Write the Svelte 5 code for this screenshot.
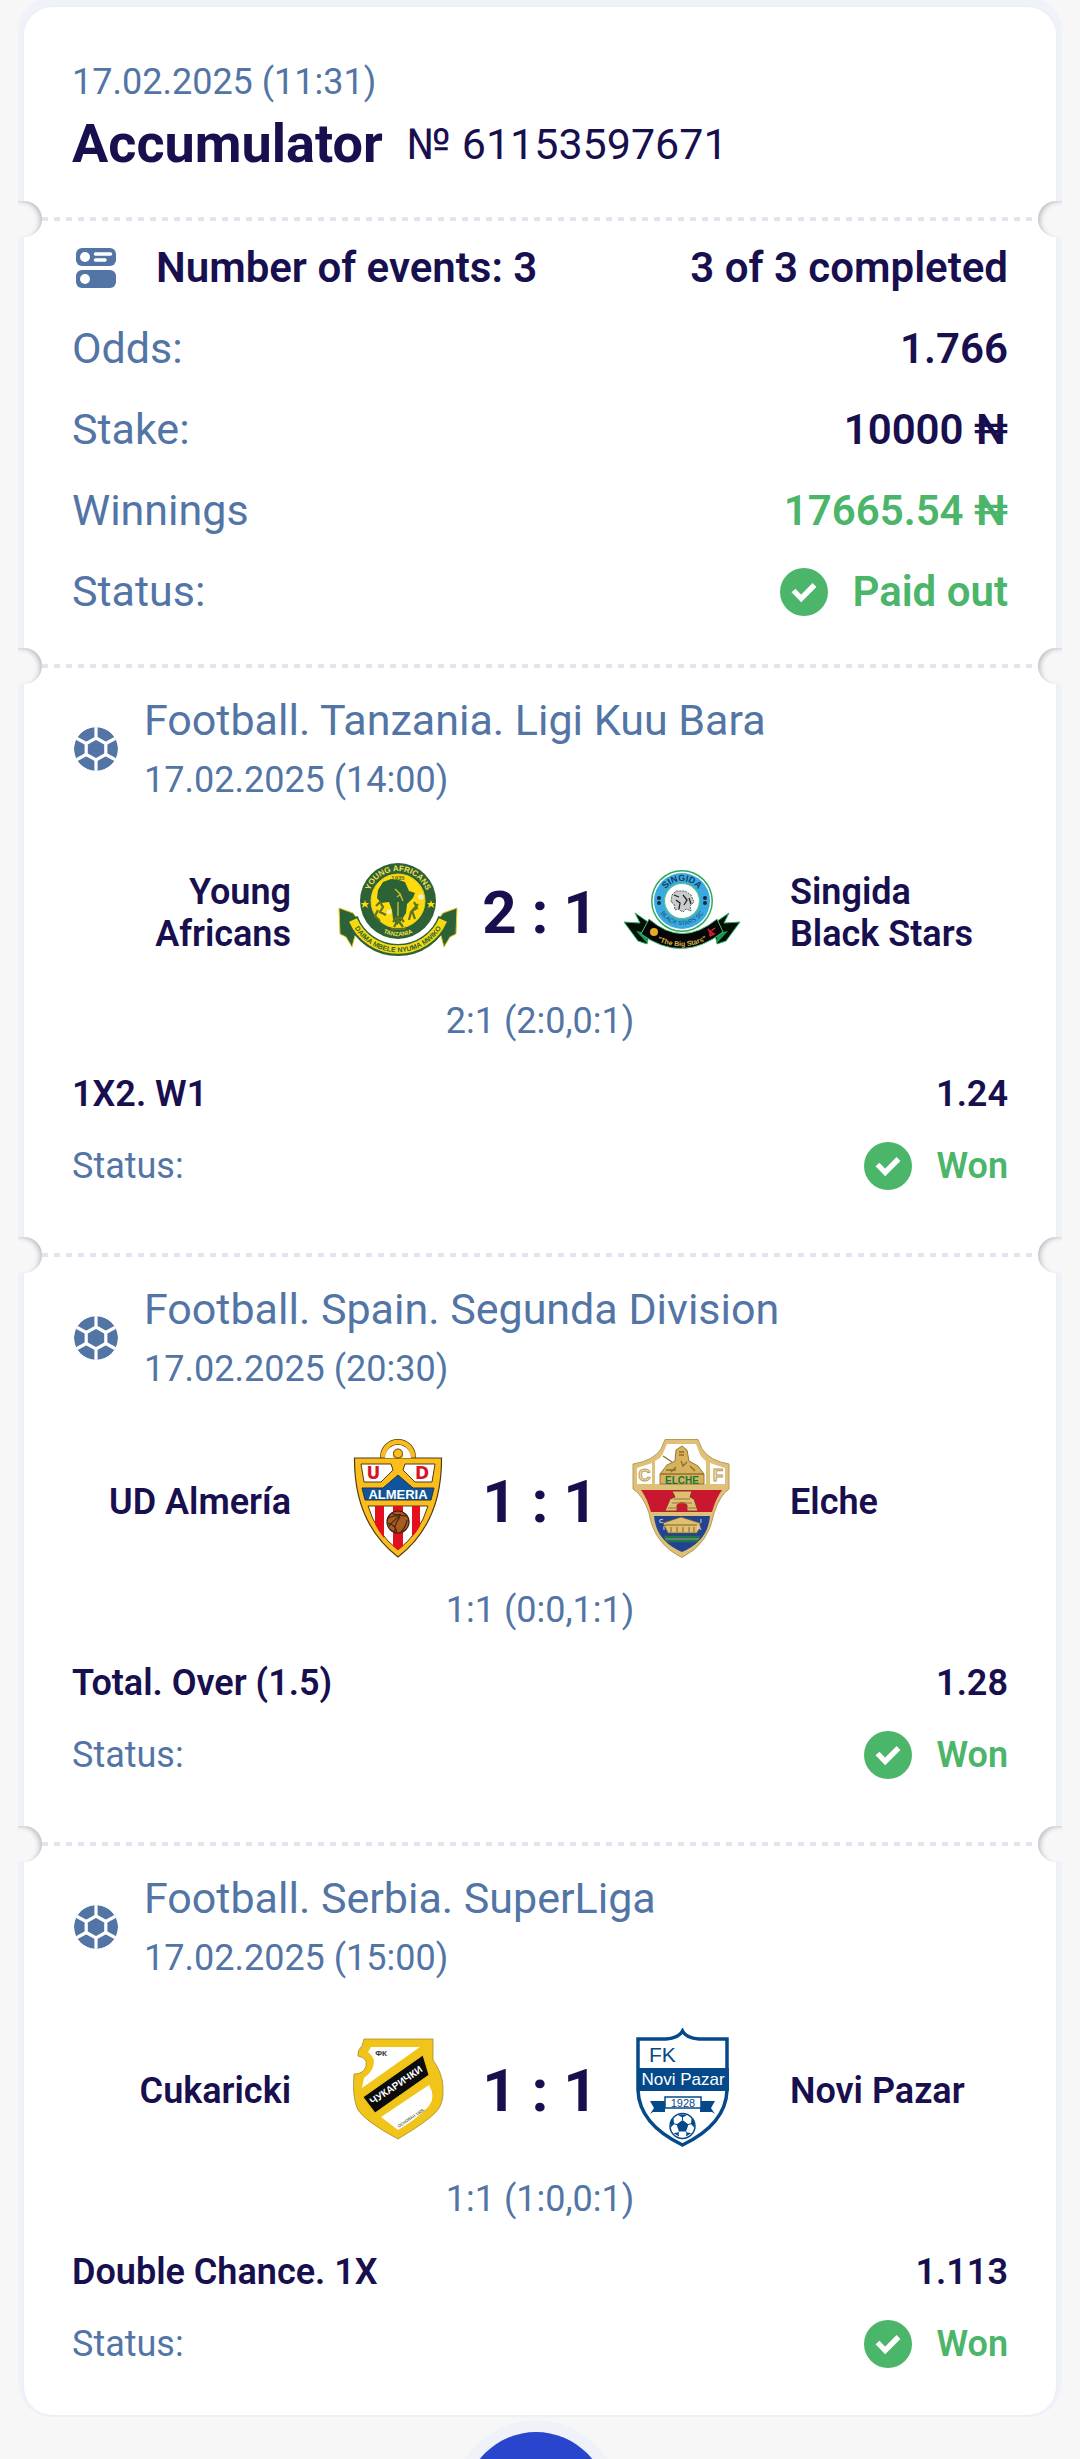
<script lang="ts">
  interface Team {
    name: string;
    crest: string;
  }

  interface BetEvent {
    league: string;
    date: string;
    home: Team;
    away: Team;
    score: string;
    periods: string;
    market: string;
    odds: string;
    status: string;
  }

  const slip = {
    date: '17.02.2025 (11:31)',
    type: 'Accumulator',
    number: '№ 61153597671',
    odds: '1.766',
    stake: '10000 ₦',
    winnings: '17665.54 ₦',
    status: 'Paid out',
  };

  const events: BetEvent[] = [
    {
      league: 'Football. Tanzania. Ligi Kuu Bara',
      date: '17.02.2025 (14:00)',
      home: { name: 'Young Africans', crest: 'yanga' },
      away: { name: 'Singida Black Stars', crest: 'singida' },
      score: '2 : 1',
      periods: '2:1 (2:0,0:1)',
      market: '1X2. W1',
      odds: '1.24',
      status: 'Won',
    },
    {
      league: 'Football. Spain. Segunda Division',
      date: '17.02.2025 (20:30)',
      home: { name: 'UD Almería', crest: 'almeria' },
      away: { name: 'Elche', crest: 'elche' },
      score: '1 : 1',
      periods: '1:1 (0:0,1:1)',
      market: 'Total. Over (1.5)',
      odds: '1.28',
      status: 'Won',
    },
    {
      league: 'Football. Serbia. SuperLiga',
      date: '17.02.2025 (15:00)',
      home: { name: 'Cukaricki', crest: 'cukaricki' },
      away: { name: 'Novi Pazar', crest: 'novipazar' },
      score: '1 : 1',
      periods: '1:1 (1:0,0:1)',
      market: 'Double Chance. 1X',
      odds: '1.113',
      status: 'Won',
    },
  ];

  const completed = events.filter((e) => e.status !== '').length;
</script>

{#snippet tear()}
  <div class="tear" aria-hidden="true">
    <span class="notch left"></span>
    <span class="perforation"></span>
    <span class="notch right"></span>
  </div>
{/snippet}

{#snippet check()}
  <svg class="check" viewBox="0 0 48 48" aria-hidden="true">
    <circle cx="24" cy="24" r="24" fill="#4bb56a" />
    <path d="M13.5 22.5l7.7 8L34.5 17" fill="none" stroke="#fff" stroke-width="5.4" />
  </svg>
{/snippet}

{#snippet crest(name: string)}
  <svg class="crest" viewBox="0 0 120 120" aria-hidden="true">
    {#if name === 'yanga'}
      <path d="M1 58l14 5 6 8-7 26-6-10-6-3z" fill="#2c6236" stroke="#e4c91c" stroke-width="1" />
      <path d="M119 58l-14 5-6 8 7 26 6-10 6-3z" fill="#2c6236" stroke="#e4c91c" stroke-width="1" />
      <path d="M14 68A49 49 0 0 0 106 68" fill="none" stroke="#2c6236" stroke-width="12" />
      <path d="M15 70A49 49 0 0 0 105 70" fill="none" stroke="#f6d90f" stroke-width="8.5" />
      <circle cx="60" cy="51" r="40" fill="#fff" />
      <circle cx="60" cy="51" r="38" fill="#2c6236" />
      <circle cx="60" cy="51" r="27" fill="#ffdb0d" stroke="#e8cf20" stroke-width="1" />
      <path
        d="M45 32l8-3 8 1 6 2 4 9 6 2-2 5-6 6-1 9-5 8-4 4-4-6-1-9-3-8-8 1-4-5 1-8z"
        fill="#2c6236"
      />
      <path d="M57 39l5 5 3 7M60 52v14M63 44l-4 3" fill="none" stroke="#cdbd2c" stroke-width="1.4" />
      <path
        d="M38 56l4-4 3 5-3 5 6 3M40 60l-3 6 5 5M76 52l3 6-5 3 3 8M80 54l-7 8-2 8M56 77l4-7 5 7M55 72l3-4h5l3 4M53 79h15"
        fill="none"
        stroke="#5d7420"
        stroke-width="2.2"
      />
      <circle cx="51" cy="62" r="2.4" fill="#efeacb" />
      <circle cx="83" cy="47" r="2.8" fill="#efeacb" />
      <path d="M27 50l1 3 3 0-2 2 1 3-3-2-3 2 1-3-2-2 3 0zM93 50l1 3 3 0-2 2 1 3-3-2-3 2 1-3-2-2 3 0z" fill="#ffdb0d" />
      <path id="yanga-top" d="M30 51A30 30 0 0 1 90 51" fill="none" />
      <path id="yanga-low" d="M25 51A35 35 0 0 0 95 51" fill="none" />
      <path id="yanga-banner" d="M13 71A51 51 0 0 0 107 71" fill="none" />
      <text class="b" font-size="8" fill="#f6e04a" text-anchor="middle">
        <textPath href="#yanga-top" startOffset="50%">YOUNG AFRICANS</textPath>
      </text>
      <text class="b" font-size="6" fill="#f6e04a" text-anchor="middle">
        <textPath href="#yanga-low" startOffset="50%">TANZANIA</textPath>
      </text>
      <text class="b" font-size="7" fill="#2c6236" text-anchor="middle">
        <textPath href="#yanga-banner" startOffset="50%">DAIMA MBELE NYUMA MWIKO</textPath>
      </text>
      <text class="b" x="60" y="30" font-size="6" fill="#4c6a1d" text-anchor="middle">1935</text>
    {:else if name === 'singida'}
      <path d="M2 72l16 1-5-10 16 11-4 20-9-3z" fill="#050f08" stroke="#35b567" stroke-width="1" />
      <path d="M118 72l-16 1 5-10-16 11 4 20 9-3z" fill="#050f08" stroke="#35b567" stroke-width="1" />
      <path d="M14 81l11 2v10zM106 81l-11 2v10z" fill="#149c53" />
      <path
        d="M27 69Q60 98 95 69L101 82Q60 114 19 84z"
        fill="#060606"
        stroke="#4fc17c"
        stroke-width="1"
      />
      <circle cx="60" cy="51" r="31" fill="#2cab5d" />
      <circle cx="60" cy="51" r="29.5" fill="#fff" />
      <circle cx="60" cy="51" r="28" fill="#3aa9df" />
      <circle cx="60" cy="51" r="17.5" fill="#fff" stroke="#50c487" stroke-width="1.2" />
      <path
        d="M50 45l4-4 9 0 6 4 3 7-4 4 1 5-5-2-3 3-5-3-3 1-1-6-3-2z"
        fill="#c9cccc"
        stroke="#5b6060"
        stroke-width="1"
        stroke-dasharray="2 1"
      />
      <path d="M54 50l4 3-1 6M61 45l4 5-3 5M67 48l2 6M52 45l5 2" fill="none" stroke="#222" stroke-width="1.3" />
      <path id="singida-top" d="M40 51A20 20 0 0 1 80 51" fill="none" />
      <path id="singida-low" d="M35 50A25 25 0 0 0 85 50" fill="none" />
      <path id="singida-motto" d="M30 88Q60 105 90 87" fill="none" />
      <text class="b" font-size="9" fill="#173c63" text-anchor="middle">
        <textPath href="#singida-top" startOffset="50%">SINGIDA</textPath>
      </text>
      <text font-size="6" fill="#1b4a73" text-anchor="middle">
        <textPath href="#singida-low" startOffset="50%">BLACK STARS SC</textPath>
      </text>
      <text class="b" font-size="7" fill="#d9b44e" text-anchor="middle">
        <textPath href="#singida-motto" startOffset="50%">"The Big Stars"</textPath>
      </text>
      <g fill="#10283d">
        <circle cx="37" cy="48" r="2" /><circle cx="37" cy="53" r="2" />
        <circle cx="83" cy="48" r="2" /><circle cx="83" cy="53" r="2" />
      </g>
      <circle cx="32" cy="82" r="4" fill="#e8ab20" />
      <path d="M86 79q3 3 2 7M93 78l-5 4 4 2-4 2" fill="none" stroke="#dc2230" stroke-width="1.6" />
    {:else if name === 'almeria'}
      <circle cx="60" cy="18" r="15" fill="#fff" stroke="#4d3f17" stroke-width="6" />
      <circle cx="60" cy="18" r="15" fill="none" stroke="#fcbc1c" stroke-width="4.5" />
      <path
        d="M16.5 19h87Q104 84 60 118 16 84 16.5 19z"
        fill="#fcbc1c"
        stroke="#4d3f17"
        stroke-width="1.2"
      />
      <path d="M23 25h30l2 6-12 12H26zM97 25H67l-2 6 12 12h17z" fill="#fff" stroke="#4d3f17" stroke-width="1" />
      <path d="M47 19a13 13 0 0 1 26 0z" fill="#fff" />
      <path d="M60 12v6M55 18l5-2 5 2" stroke="#fcbc1c" stroke-width="3" />
      <circle cx="60" cy="14.5" r="4.5" fill="#fcbc1c" stroke="#4d3f17" stroke-width="1" />
      <path d="M24 49h21l15-13 15 13h21l-3 12H27z" fill="#10559c" stroke="#233449" stroke-width="1" />
      <path d="M30 67h60Q82 94 60 111 38 94 30 67z" fill="#fff" stroke="#4d3f17" stroke-width="1" />
      <path d="M37 67h9v32q-5-6-9-14zM55 67h10v40l-5 4-5-4zM74 67h8v20q-4 7-8 11z" fill="#e30f1f" />
      <circle cx="60" cy="83" r="11" fill="#a65c21" stroke="#3f1f0e" stroke-width="1.2" />
      <path
        d="M50 79q9-4 19-2M53 74q6 3 10 1M51 87q7-8 11-10M57 93q-1-8 5-15M63 93q5-5 6-12M50 84q7 1 9 10"
        fill="none"
        stroke="#4c250e"
        stroke-width="1.2"
      />
      <text class="b wide" x="35.5" y="40" font-size="17" fill="#d71525" text-anchor="middle">U</text>
      <text class="b wide" x="84" y="40" font-size="17" fill="#d71525" text-anchor="middle">D</text>
      <text class="b" x="60" y="60" font-size="13" fill="#fff" text-anchor="middle">ALMERIA</text>
    {:else if name === 'elche'}
      <path
        d="M43 .5H76L80 10Q88 22 107 25V50Q98 56 92 74 87 105 60 118.5 32 105 27 74 21 56 11 50V25Q31 22 39 10z"
        fill="#dfc078"
        stroke="#b89a58"
        stroke-width="1"
      />
      <path d="M45 5H74L77 13Q79 19 84 22V45H33V22Q40 19 42 12z" fill="#fff" />
      <path d="M15 29l15-5V45H15zM103 29l-15-5V45h15z" fill="#fff" />
      <path d="M19 51H100Q94 59 90 73H29Q25 59 19 51z" fill="#c8172f" />
      <path d="M32 77H88Q86 102 60 113 34 102 32 77z" fill="#224490" />
      <path d="M42 98H78M44 102H76" stroke="#1b7a43" stroke-width="2.5" />
      <path d="M43 100H77" stroke="#dfc078" stroke-width=".8" />
      <path
        d="M38 35l7-9 8-4 1-11 6-4 5 4 2 11 9 5 6 8zM38 35h44v10H38z"
        fill="#d6b25c"
        stroke="#8c6d2c"
        stroke-width=".9"
      />
      <path d="M41 17l9 6M54 28l-5 5M59 22l2 5 4-4M68 27l5 5M57 13h5M57 16h5M44 31h10" stroke="#8c6d2c" stroke-width="1.3" fill="none" />
      <path d="M50 52h20l-2 6 4 2 4 12H65v-6q-5-5-10 0v6H43l5-12 5-2z" fill="#e0bf72" stroke="#8e3527" stroke-width="1" />
      <path d="M52 60h16M50 64h20M46 69h8M66 69h9" stroke="#98703a" stroke-width="1" />
      <path d="M41 84l18-6 19 6v4l-3 6H46l-3-6z" fill="#e0bf72" stroke="#66592e" stroke-width=".8" />
      <path d="M43 86h32M49 88v5M55 88v5M61 88v5M67 88v5M72 88v5" stroke="#77642c" stroke-width="1" />
      <text class="b" x="60" y="44.5" font-size="10" fill="#16763d" text-anchor="middle">ELCHE</text>
      <text class="b" x="22.5" y="42" font-size="17" fill="#f4e5be" stroke="#bc9d59" stroke-width="1" text-anchor="middle">C</text>
      <text class="b" x="96" y="42" font-size="17" fill="#f4e5be" stroke="#bc9d59" stroke-width="1" text-anchor="middle">F</text>
      <g class="b" font-size="6" fill="#d9dbe2">
        <text x="37" y="84">C</text><text x="41" y="91">I</text>
        <text x="78" y="84">I</text><text x="75" y="91">A</text>
      </g>
    {:else if name === 'cukaricki'}
      <path
        d="M26 11H95V32Q105 46 105 60 106 76 98 84 90 93 60 111 28 94 20 82 14 70 16 46 26 46 28 38 30 30 20 28 19 22 24 18z"
        fill="#f0c419"
        stroke="#a88a2b"
        stroke-width=".8"
      />
      <path d="M33 19H82L24 60 26 50Q36 43 36 33 35 28 30 24z" fill="#fff" />
      <path d="M43 89L91 57Q98 69 91 78 79 91 60 102z" fill="#fff" />
      <path d="M85 27L91 47 37 85 25 69z" fill="#0b0b0b" stroke="#f0c419" stroke-width="1" />
      <text class="b" x="43" y="28" font-size="8" fill="#3c3628" text-anchor="middle">ФК</text>
      <text class="b" font-size="10" fill="#fff" text-anchor="middle" transform="translate(60 60) rotate(-34)">ЧУКАРИЧКИ</text>
      <text class="b" font-size="4" fill="#5d5a4e" text-anchor="middle" transform="translate(74 91) rotate(-34)">ОСНОВАН 1926.</text>
    {:else if name === 'novipazar'}
      <path
        d="M16 11H44Q57 10 60.5 3 64 10 77 11H105V62Q104 96 60.5 117 17 96 16 62z"
        fill="#fff"
        stroke="#05498a"
        stroke-width="3.5"
      />
      <path d="M15 40H107V63H15z" fill="#05498a" />
      <path d="M28 73h15v11H31l-3 2 4-6zM93 73H78v11h12l3 2-4-6z" fill="#05498a" />
      <path d="M43 69h36v11H43z" fill="#fff" stroke="#05498a" stroke-width="1.5" />
      <circle cx="60.5" cy="98" r="12.5" fill="#fff" stroke="#05498a" stroke-width="1.5" />
      <path
        d="M60.5 92l6 4.500-2.500 7h-7l-2.500-7zM55 86.500h11l-5.500 3zM49 93l2.500-3 .5 6-3.500 4zM72 93l-2.500-3-.5 6 3.500 4zM51.500 105l5-.5.5 4zM69.500 105l-5-.5-.5 4z"
        fill="#05498a"
      />
      <path d="M60.5 92v-3M66 96.500l4-1M64 103.500l2 3M57 103.500l-2 3M55 96.500l-4-1" stroke="#05498a" stroke-width="1" />
      <text x="27" y="34" font-size="21" fill="#05498a">FK</text>
      <text x="61" y="57" font-size="17" fill="#fff" text-anchor="middle">Novi Pazar</text>
      <text x="61" y="78.5" font-size="11" fill="#05498a" text-anchor="middle">1928</text>
    {/if}
  </svg>
{/snippet}

<main class="page">
  <article class="slip">
    <header class="head">
      <time class="small muted">{slip.date}</time>
      <div class="title">
        <h1>{slip.type}</h1>
        <span class="number">{slip.number}</span>
      </div>
    </header>

    {@render tear()}

    <section class="summary">
      <div class="row strong">
        <span class="count">
          <svg class="list-icon" viewBox="0 0 40 40" aria-hidden="true">
            <rect width="40" height="18" rx="6" fill="#5275a5" />
            <rect y="22" width="40" height="18" rx="6" fill="#5275a5" />
            <circle cx="9" cy="9" r="5" fill="#fff" />
            <circle cx="9" cy="31" r="5" fill="#fff" />
            <path d="M19.5 6H34.5M19.5 12H29" stroke="#fff" stroke-width="3.5" stroke-linecap="round" />
          </svg>
          Number of events: {events.length}
        </span>
        <span>{completed} of {events.length} completed</span>
      </div>
      <dl class="totals">
        <div class="row">
          <dt>Odds:</dt>
          <dd>{slip.odds}</dd>
        </div>
        <div class="row">
          <dt>Stake:</dt>
          <dd>{slip.stake}</dd>
        </div>
        <div class="row">
          <dt>Winnings</dt>
          <dd class="win">{slip.winnings}</dd>
        </div>
        <div class="row">
          <dt>Status:</dt>
          <dd class="win status">{@render check()}{slip.status}</dd>
        </div>
      </dl>
    </section>

    {#each events as event (event.league)}
      {@render tear()}
      <section class="event">
        <div class="event-head">
          <svg class="ball" viewBox="0 0 44 44" aria-hidden="true">
            <circle cx="22" cy="22" r="22" fill="#5275a5" />
            <g fill="none" stroke="#fff" stroke-width="3.2">
              <path d="M22 11l9.800 5.500v11L22 33l-9.800-5.500v-11z" />
              <path d="M22 11V-1M22 33v12M31.800 16.500l12-6.500M31.800 27.500l12 6.500M12.200 16.500l-12-6.500M12.200 27.500l-12 6.500" />
            </g>
          </svg>
          <div class="event-info">
            <h2>{event.league}</h2>
            <time class="small">{event.date}</time>
          </div>
        </div>

        <div class="match">
          <span class="team home">{event.home.name}</span>
          {@render crest(event.home.crest)}
          <strong class="score">{event.score}</strong>
          {@render crest(event.away.crest)}
          <span class="team away">{event.away.name}</span>
        </div>
        <p class="periods small muted">{event.periods}</p>

        <dl class="bet small">
          <div class="row strong">
            <dt class="market">{event.market}</dt>
            <dd>{event.odds}</dd>
          </div>
          <div class="row">
            <dt>Status:</dt>
            <dd class="win status">{@render check()}{event.status}</dd>
          </div>
        </dl>
      </section>
    {/each}
  </article>

  <div class="dock">
    <button class="fab" type="button" aria-label="Actions"></button>
  </div>
</main>

<style>
  :global(body) {
    background: #f7f7f7;
  }

  .page {
    padding: 7px 24px 0;
    overflow: hidden;
    font-family: Roboto, 'Noto Sans', sans-serif;
    font-size: 42px;
    line-height: 49px;
    color: #180f4f;
  }

  h1,
  h2,
  p,
  dl,
  dd {
    margin: 0;
  }

  .slip {
    background: #fff;
    border-radius: 28px;
    box-shadow:
      0 0 2px #dfe3ef,
      0 -4px 0 6px #eff2f8;
  }

  .small {
    font-size: 36px;
    line-height: 42px;
  }

  .muted {
    color: #5275a5;
  }

  .head {
    display: flex;
    flex-direction: column;
    gap: 9px;
    padding: 54px 48px 25px;
  }

  .title {
    display: flex;
    align-items: center;
    gap: 24px;
  }

  h1 {
    font-size: 54px;
    line-height: 64px;
    font-weight: 700;
  }

  .number {
    font-size: 43px;
  }

  .tear {
    display: flex;
    align-items: center;
    margin: 0 -6px;
  }

  .notch {
    width: 24px;
    height: 36px;
    background: #f7f7f7;
  }

  .notch.left {
    border-radius: 0 18px 18px 0;
    box-shadow: inset -4px 2px 5px -2px #b9bcc4;
  }

  .notch.right {
    border-radius: 18px 0 0 18px;
    box-shadow: inset 4px 2px 5px -2px #b9bcc4;
  }

  .perforation {
    flex: 1;
    height: 4px;
    background: repeating-linear-gradient(90deg, #e2e4f0 0 6px, transparent 6px 12px);
  }

  .row {
    display: flex;
    justify-content: space-between;
    align-items: center;
  }

  .summary {
    display: flex;
    flex-direction: column;
    gap: 32px;
    padding: 6px 48px 32px;
  }

  .totals {
    display: flex;
    flex-direction: column;
    gap: 32px;
  }

  .strong {
    font-weight: 600;
  }

  .count {
    display: flex;
    align-items: center;
    gap: 40px;
  }

  .list-icon {
    width: 40px;
    height: 40px;
    margin-left: 4px;
  }

  dt {
    color: #5275a5;
  }

  .totals dt {
    font-size: 43px;
  }

  dd {
    font-weight: 600;
  }

  .win {
    color: #4bb56a;
  }

  .status {
    display: flex;
    align-items: center;
    gap: 24px;
  }

  .check {
    width: 48px;
    height: 48px;
  }

  .event {
    padding: 12px 48px 47px;
  }

  .event-head {
    display: flex;
    align-items: center;
    gap: 26px;
    color: #5275a5;
  }

  .ball {
    width: 44px;
    height: 44px;
    margin-left: 2px;
    border-radius: 50%;
  }

  .event-info {
    display: flex;
    flex-direction: column;
    gap: 14px;
  }

  h2 {
    font-size: 43px;
    font-weight: 400;
  }

  .match {
    display: grid;
    grid-template-columns: minmax(0, 1fr) 120px 164px 120px minmax(0, 1fr);
    align-items: center;
    margin-top: 49px;
  }

  .team {
    padding-top: 6px;
    font-size: 36px;
    line-height: 42px;
    font-weight: 600;
  }

  .home {
    padding-right: 47px;
    text-align: right;
  }

  .away {
    padding-left: 48px;
  }

  .crest {
    width: 120px;
    height: 120px;
    font-family: 'Liberation Sans', Arial, sans-serif;
  }

  .b {
    font-weight: 700;
  }

  .wide {
    font-family: 'DejaVu Sans', sans-serif;
  }

  .score {
    padding-top: 6px;
    font-size: 60px;
    line-height: 70px;
    font-weight: 700;
    text-align: center;
  }

  .periods {
    margin-top: 30px;
    text-align: center;
  }

  .bet {
    display: flex;
    flex-direction: column;
    gap: 27px;
    margin-top: 31px;
  }

  .market {
    color: #180f4f;
  }

  /* only the top of the round button shows above the page edge */
  .dock {
    display: flex;
    justify-content: center;
    height: 27px;
    margin-top: 5px;
    padding: 12px 8px 0 0;
    overflow: hidden;
  }

  .fab {
    flex: none;
    width: 144px;
    height: 144px;
    padding: 0;
    border: 0;
    border-radius: 50%;
    background: #2944cd;
    box-shadow: 0 0 0 12px #eff2f8;
  }
</style>
